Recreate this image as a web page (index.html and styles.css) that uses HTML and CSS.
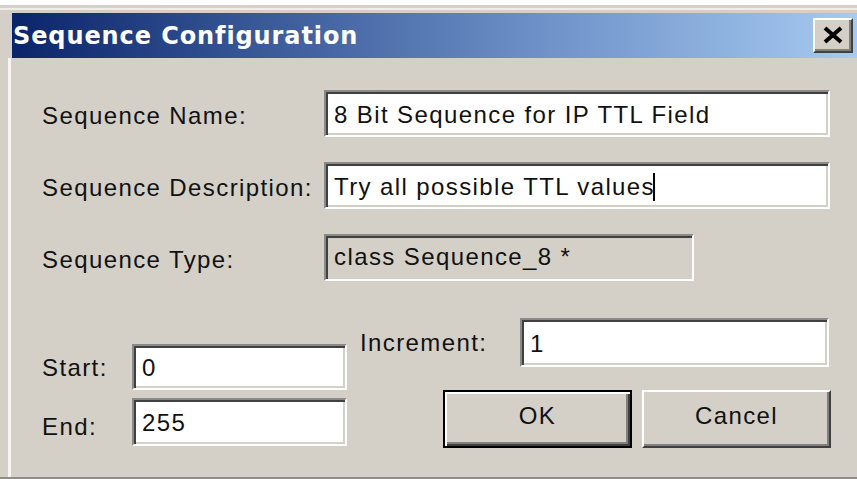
FILE: index.html
```html
<!DOCTYPE html>
<html>
<head>
<meta charset="utf-8">
<title>Sequence Configuration</title>
<link rel="stylesheet" href="styles.css">
</head>
<body>
<div class="window">
  <div class="titlebar">
    <span class="title">Sequence Configuration</span>
    <button class="close" aria-label="Close">
      <svg width="22" height="18" viewBox="0 0 22 18">
        <path d="M3 2 L19 16 M19 2 L3 16" stroke="#000" stroke-width="4" fill="none"/>
      </svg>
    </button>
  </div>
  <div class="body">
    <div class="fields">
      <span class="label">Sequence Name:</span>
      <div class="edit">8 Bit Sequence for IP TTL Field</div>
      <span class="label">Sequence Description:</span>
      <div class="edit">Try all possible TTL values<span class="caret"></span></div>
      <span class="label">Sequence Type:</span>
      <div class="edit readonly">class Sequence_8 *</div>
    </div>
    <div class="lower">
      <div class="range">
        <span class="label">Start:</span>
        <div class="edit">0</div>
        <span class="label">End:</span>
        <div class="edit">255</div>
      </div>
      <div class="side">
        <div class="inc-row">
          <span class="label inc-label">Increment:</span>
          <div class="edit inc-edit">1</div>
        </div>
        <div class="buttons">
          <button class="btn default"><span class="btn-face">OK</span></button>
          <button class="btn"><span class="btn-face">Cancel</span></button>
        </div>
      </div>
    </div>
  </div>
</div>
</body>
</html>
```
FILE: styles.css
```css
html, body {
  margin: 0;
  padding: 0;
  background: #ffffff;
}

body {
  width: 857px;
  height: 479px;
  overflow: hidden;
  font-family: "Liberation Sans", Arial, sans-serif;
  color: #000;
}

.window {
  margin-top: 5px;
  height: 474px;
  box-sizing: border-box;
  background: #d4d0c8;
  border-top: 3px solid #d4d0c8;
  box-shadow: inset 0 2px 0 #eeede8;
  padding-top: 5px;
  border-bottom: 2px solid #8f8d88;
  display: flex;
  flex-direction: column;
}

/* caption bar */
.titlebar {
  margin-left: 12px;
  height: 45px;
  background: linear-gradient(to right, #0a246a 0%, #3a5a98 30%, #6d90c8 62%, #a6caf0 100%);
  display: flex;
  align-items: center;
  justify-content: space-between;
}

.title {
  padding-left: 1px;
  padding-top: 1px;
  color: #fff;
  font-family: "DejaVu Sans", Verdana, sans-serif;
  font-weight: bold;
  font-size: 24px;
  letter-spacing: 0.9px;
  line-height: 1;
}

.close {
  width: 40px;
  height: 35px;
  margin-right: 4px;
  padding: 0;
  background: #d4d0c8;
  border: 2px solid;
  border-color: #ffffff #404040 #404040 #ffffff;
  box-shadow: inset -2px -2px 0 #808080;
  display: flex;
  align-items: center;
  justify-content: center;
}

.close svg {
  display: block;
  margin-top: -1px;
}

/* dialog client area */
.body {
  flex: 1;
  margin-left: 8px;
  border-left: 3px solid #f6f5f1;
  padding: 32px 0 0 31px;
}

.label {
  font-size: 24px;
  letter-spacing: 1.4px;
  line-height: 1;
  color: #111;
  display: flex;
  align-items: center;
}

.fields {
  display: grid;
  grid-template-columns: 282px 506px;
  grid-auto-rows: 47px;
  row-gap: 25px;
}

.fields .label {
  padding-top: 5px;
}

/* sunken edit box */
.edit {
  box-sizing: border-box;
  height: 100%;
  background: #fff;
  border: 2px solid;
  border-color: #8a8a8a #ffffff #ffffff #8a8a8a;
  box-shadow: inset 2px 2px 0 #404040, inset -2px -2px 0 #d4d0c8;
  padding: 2px 8px 0 8px;
  font-size: 24px;
  letter-spacing: 1.4px;
  line-height: 1;
  display: flex;
  align-items: center;
  white-space: nowrap;
  color: #111;
}

.edit.readonly {
  background: #d4d0c8;
  width: 370px;
  padding-bottom: 4px;
}

.caret {
  display: inline-block;
  width: 2px;
  height: 28px;
  background: #000;
  margin-left: -2px;
}

.lower {
  display: flex;
  margin-top: 37px;
}

.range {
  margin-top: 26px;
  display: grid;
  grid-template-columns: 90px 215px;
  grid-template-rows: 46px 48px;
  row-gap: 8px;
}

.range .label {
  padding-top: 2px;
}

.range .label:nth-of-type(2) {
  padding-top: 10px;
}

.side {
  margin-left: 13px;
  display: flex;
  flex-direction: column;
}

.inc-row {
  display: flex;
  height: 49px;
}

.inc-label {
  width: 160px;
  padding-top: 1px;
}

.inc-edit {
  width: 309px;
}

.buttons {
  display: flex;
  gap: 10px;
  margin-top: 23px;
  padding-left: 83px;
}

/* raised push buttons */
.btn {
  width: 189px;
  height: 58px;
  padding: 0 0 6px 0;
  background: #d4d0c8;
  border: 2px solid;
  border-color: #ffffff #404040 #404040 #ffffff;
  box-shadow: inset -2px -2px 0 #808080;
  font-family: "Liberation Sans", Arial, sans-serif;
  font-size: 24px;
  letter-spacing: 1.4px;
  color: #111;
}

.btn.default {
  border: 2px solid #000;
  box-shadow: inset 2px 2px 0 #ffffff, inset -2px -2px 0 #404040, inset -4px -4px 0 #808080;
}

.btn-face {
  display: block;
  line-height: 1;
}
```
